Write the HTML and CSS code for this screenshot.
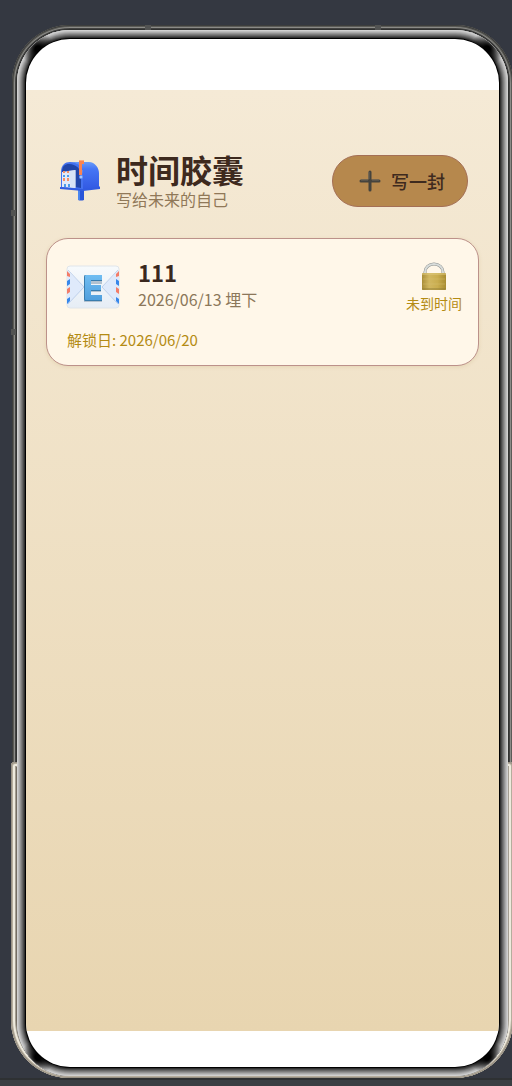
FILE: index.html
```html
<!DOCTYPE html>
<html lang="zh-CN">
<head>
  <meta charset="UTF-8" />
  <meta name="viewport" content="width=device-width, initial-scale=1" />
  <title>时间胶囊</title>
  <link rel="stylesheet" href="styles.css">
</head>
<body>

<div class="phone">
  <span class="notch notch-top-left"></span>
  <span class="notch notch-top-right"></span>
  <span class="notch notch-side-upper"></span>
  <span class="notch notch-side-lower"></span>
  <div class="bezel">
    <div class="screen">
      <main class="page">
        <header class="page-header">
          <svg class="mailbox" viewBox="0 0 40 42" aria-hidden="true">
            <defs>
              <linearGradient id="boxSide" x1="0" y1="0" x2="0" y2="1">
                <stop offset="0" stop-color="#6a9cf8" />
                <stop offset="0.25" stop-color="#4676f5" />
                <stop offset="1" stop-color="#3158e2" />
              </linearGradient>
            </defs>
            <path d="M18 26h6v14q-3 1-6 0z" fill="#2854d9" />
            <path d="M18 27h2v13h-2z" fill="#4a86ef" />
            <path d="M9 2h20c6 0 10 6 10 11v13l1 1v1l-17 2V14C23 7 17 2 9 2z" fill="url(#boxSide)" />
            <path d="M1 26V12C1 5 5 2 10 2c8 0 13 5 13 12v16L1 28z" fill="#4572ef" />
            <path d="M2 25V12C2 6 5 4 9 4c7 0 12 5 12 11v13z" fill="#2145a9" />
            <path d="M2 12l13-2v18L2 27z" fill="#e2e9f8" />
            <path d="M8 11l8-1v18l-5-1z" fill="#d3def3" opacity="0.7" />
            <path d="M3 11h2v2H3zM7 11h2v2H7zM3 18h2v3H3zM7 18h2v3H7z" fill="#f58e65" />
            <path d="M3 15h2v2H3zM7 15h2v2H7zM4 24h2v3H4zM8 24h2v3H8z" fill="#4c9be9" />
            <path d="M0 27l23 2 17-2v2l-17 2-23-2z" fill="#315be0" />
            <path d="M19 0h5v4h-2v11h-3z" fill="#fa8350" />
            <path d="M19 0h5v1h-5z" fill="#ffab79" />
            <circle cx="21" cy="17" r="2" fill="#6e9cf5" />
            <circle cx="21" cy="17" r="1" fill="#bed2fb" />
          </svg>
          <div class="heading">
            <h1>时间胶囊</h1>
            <p>写给未来的自己</p>
          </div>
          <button class="write-btn" type="button">
            <svg class="plus" viewBox="0 0 22 22" aria-hidden="true">
              <path d="M11 2v18M2 11h18" fill="none" stroke="#45433d" stroke-width="3" stroke-linecap="round" />
              <path d="M2 10h7M13 10h7M10 2v7" fill="none" stroke="#6e675a" />
            </svg>
            <span>写一封</span>
          </button>
        </header>

        <article class="capsule">
          <div class="capsule-row">
            <svg class="envelope" viewBox="0 0 54 44" aria-hidden="true">
              <defs>
                <linearGradient id="paper" x1="0" y1="0" x2="0" y2="1">
                  <stop offset="0" stop-color="#f7fafc" />
                  <stop offset="1" stop-color="#e6edf5" />
                </linearGradient>
                <linearGradient id="letter" x1="0" y1="0" x2="0" y2="1">
                  <stop offset="0" stop-color="#70bdf2" />
                  <stop offset="1" stop-color="#509fdd" />
                </linearGradient>
              </defs>
              <rect x="1" y="1" width="52" height="42" rx="3" fill="url(#paper)" stroke="#e0e5ea" />
              <path d="M1 5l17 17L1 40zM53 5L36 22l17 18z" fill="#dfeafb" />
              <path d="M2 5l16 17L2 39M52 5L36 22l16 17" fill="none" stroke="#bfd1ec" />
              <path d="M1 6l3 3v3l-3-1zM1 24l3-2v5l-3 2zM53 6l-3 3v3l3-1zM53 24l-3-2v5l3 2z" fill="#f47c67" />
              <path d="M1 16l3-2v5l-3 2zM1 34l3-2v4l-3 3zM53 16l-3-2v5l3 2zM53 34l-3-2v4l3 3z" fill="#3787ea" />
              <path d="M18 12h18v7H25v2h10v6H25v3h11v7H18z" fill="#b3c2d0" />
              <path d="M19 10h17v6H25v4h10v6H25v4h11v6H19q-1 0-1-2V12q0-2 1-2z" fill="#397cad" />
              <path d="M20 10h16v5H25v5h10v5H25v5h11v5H20q-1 0-1-1V11q0-1 1-1z" fill="url(#letter)" />
            </svg>
            <div class="capsule-info">
              <h2>111</h2>
              <p>2026/06/13 埋下</p>
            </div>
            <div class="status">
              <svg class="lock" viewBox="0 0 26 30" aria-hidden="true">
                <defs>
                  <linearGradient id="brass">
                    <stop offset="0" stop-color="#a98e39" />
                    <stop offset="0.3" stop-color="#d1b760" />
                    <stop offset="0.65" stop-color="#c9ad4f" />
                    <stop offset="1" stop-color="#a88c32" />
                  </linearGradient>
                </defs>
                <path d="M4 14v-3a9 8 0 0 1 18 0v3" fill="none" stroke="#8e9290" stroke-width="3" />
                <path d="M4 14v-3a9 8 0 0 1 18 0v3" fill="none" stroke="#d8dcda" stroke-width="2" />
                <rect x="1" y="12" width="24" height="17" rx="1" fill="url(#brass)" />
                <path d="M1 13h24" stroke="#dfca7f" />
                <path d="M2 18h22M2 23h22" stroke="#d9c376" opacity="0.4" />
                <path d="M1 28h24" stroke="#958039" />
              </svg>
              <span>未到时间</span>
            </div>
          </div>
          <p class="unlock">解锁日: 2026/06/20</p>
        </article>
      </main>
    </div>
  </div>
</div>
<div class="bottom-strip"></div>

</body>
</html>
```
FILE: styles.css
```css
* {
  margin: 0;
  padding: 0;
  box-sizing: border-box;
}

body {
  font-family: "Noto Sans CJK SC", "Noto Sans", sans-serif;
  background: #343841;
  color: #3a281e;
  min-height: 100vh;
  display: flex;
  flex-direction: column;
  overflow: hidden;
}

/* Phone frame */
.phone {
  position: relative;
  flex: 1;
  display: flex;
  margin: 25px -1px 0 12px;
  padding: 5px 5px 2px;
  border-radius: 58px;
  background: #303130;
  box-shadow:
    inset 0 0 0 1px #3c3d3c,
    inset 0 0 0 2px #5b5b57,
    inset 0 0 0 3px #8b8b87,
    inset 0 0 0 4px #424241;
}

/* lighter metal on the lower part of the rim */
.phone::before {
  content: "";
  position: absolute;
  inset: 70% 0 0 -1px;
  border-radius: 4px 4px 58px 58px;
  background: #746d62;
  box-shadow:
    inset 0 0 0 1px #989184,
    inset 0 0 0 2px #b5ad9d,
    inset 0 0 0 4px #eeeadd,
    inset 0 0 0 5px #a49e92;
}

.bezel {
  position: relative;
  flex: 1;
  display: flex;
  padding: 9px;
  border-radius: 53px;
  background: #000;
  box-shadow:
    inset 0 0 0 1px #d0d0d0,
    inset 0 0 0 2px #bdbdbd,
    inset 0 0 0 3px #aaaaaa,
    inset 0 0 0 4px #939393,
    inset 0 0 0 5px #7c7c7c,
    inset 0 0 0 6px #656565,
    inset 0 0 0 7px #4b4b4b,
    inset 0 0 0 8px #303030;
}

/* dark reflections in the four corners */
.bezel::before {
  content: "";
  position: absolute;
  inset: 0;
  border-radius: 53px;
  background:
    radial-gradient(circle at 21px 19px, #000 3px, transparent 17px),
    radial-gradient(circle at calc(100% - 21px) 19px, #000 3px, transparent 17px),
    radial-gradient(circle at 21px calc(100% - 19px), #000 3px, transparent 17px),
    radial-gradient(circle at calc(100% - 21px) calc(100% - 19px), #000 3px, transparent 17px);
}

.notch {
  position: absolute;
  background: #525352;
}

.notch-top-left,
.notch-top-right {
  top: 0;
  width: 6px;
  height: 5px;
}

.notch-top-left {
  left: 133px;
}

.notch-top-right {
  right: 132px;
}

.notch-side-upper,
.notch-side-lower {
  left: -1px;
  width: 5px;
  height: 6px;
}

.notch-side-upper {
  top: 185px;
}

.notch-side-lower {
  top: 304px;
}

.screen {
  position: relative;
  flex: 1;
  display: flex;
  padding: 51px 0 36px;
  border-radius: 44px;
  background: #fff;
  overflow: hidden;
}

.page {
  flex: 1;
  padding: 61px 20px 20px;
  background: linear-gradient(#f5ead6, #e8d5b0);
}

/* Header */
.page-header {
  display: flex;
  align-items: center;
  padding: 0 11px 0 14px;
  margin-bottom: 27px;
}

.mailbox {
  width: 40px;
  height: 42px;
  margin-right: 16px;
}

.heading {
  flex: 1;
}

h1 {
  font-size: 32px;
  line-height: 36px;
  font-weight: 700;
  color: #3e2a1e;
}

.heading p {
  font-size: 16px;
  line-height: 24px;
  color: #907858;
}

.write-btn {
  display: flex;
  align-items: center;
  gap: 10px;
  height: 52px;
  padding: 0 22px 0 26px;
  border: 1px solid #a46f55;
  border-radius: 26px;
  background: #b6884d;
  color: #3e2a1e;
  font-family: inherit;
  font-size: 18px;
  line-height: 24px;
  font-weight: 500;
  cursor: pointer;
}

.plus {
  width: 22px;
  height: 22px;
}

/* Capsule card */
.capsule {
  padding: 19px 16px 13px 20px;
  border: 1px solid #bc918a;
  border-radius: 22px;
  background: #fff7e9;
  box-shadow: 0 1px 4px rgba(139, 105, 20, 0.12);
}

.capsule-row {
  display: flex;
  align-items: flex-start;
}

.envelope {
  align-self: center;
  width: 54px;
  height: 44px;
  margin: 0 18px 0 -1px;
}

.capsule-info {
  flex: 1;
}

h2 {
  font-size: 22px;
  line-height: 28px;
  font-weight: 700;
}

.capsule-info p {
  font-size: 16px;
  line-height: 26px;
  color: #8c775a;
}

.status {
  display: flex;
  flex-direction: column;
  align-items: center;
  padding-top: 3px;
  font-size: 14px;
  line-height: 24px;
  color: #b48b13;
}

.lock {
  width: 26px;
  height: 30px;
}

.unlock {
  margin-top: 13px;
  font-size: 15px;
  line-height: 24px;
  color: #b48b13;
}

.bottom-strip {
  height: 8px;
  border-top: 2px solid #2e3133;
  background: #3b3f43;
}
```
